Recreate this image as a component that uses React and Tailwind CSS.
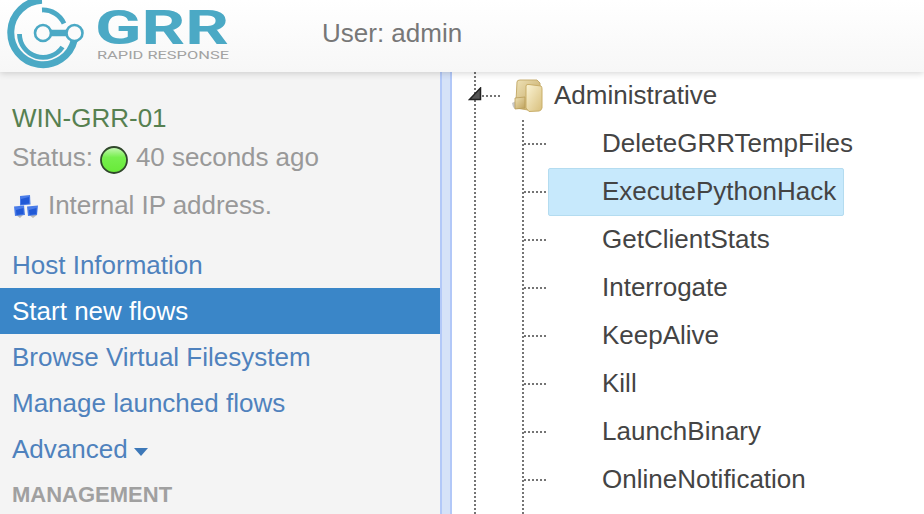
const flows = [
  { name: "DeleteGRRTempFiles" },
  { name: "ExecutePythonHack", selected: true },
  { name: "GetClientStats" },
  { name: "Interrogate" },
  { name: "KeepAlive" },
  { name: "Kill" },
  { name: "LaunchBinary" },
  { name: "OnlineNotification" },
];

const links = [
  { name: "Host Information" },
  { name: "Start new flows", selected: true },
  { name: "Browse Virtual Filesystem" },
  { name: "Manage launched flows" },
];

function Logo() {
  return (
    <svg width="240" height="72" viewBox="0 0 240 72" className="shrink-0">
      <g fill="none" stroke="#4ba9c5">
        <path d="M42 .3A32.2 32.2 0 1 0 74.3 40" strokeWidth="7" />
        <path d="M42 10A23 23 0 0 1 64 23.5" strokeWidth="4.8" />
        <path d="M19.5 34A23.5 23.5 0 0 0 62.5 47" strokeWidth="4.8" />
        <path d="M50 33H68" strokeWidth="6.5" />
        <circle cx="43" cy="33" r="8" strokeWidth="2.6" fill="#fbfbfb" />
        <circle cx="74.5" cy="33" r="8" strokeWidth="2.6" fill="#fbfbfb" />
      </g>
      <text x="95" y="44" textLength="134" lengthAdjust="spacingAndGlyphs" fontFamily="Roboto, sans-serif" fontSize="48" fontWeight="700" fill="#4ba9c5">GRR</text>
      <text x="97" y="58.5" textLength="132" lengthAdjust="spacingAndGlyphs" fontFamily="Roboto, sans-serif" fontSize="11.5" fill="#a2a2a2">RAPID RESPONSE</text>
    </svg>
  );
}

function Folder() {
  return (
    <svg width="34" height="36" viewBox="0 0 34 36" className="shrink-0">
      <defs>
        <linearGradient id="front" x1="0" y1="0" x2="1" y2="1">
          <stop offset="0" stopColor="#fbf4d5" />
          <stop offset="1" stopColor="#d8bf7c" />
        </linearGradient>
        <linearGradient id="back" x1="0" y1="0" x2="1" y2="1">
          <stop offset="0" stopColor="#efe2b6" />
          <stop offset="1" stopColor="#bea15b" />
        </linearGradient>
      </defs>
      <path d="M0 25L4 23V31Q1 31 0 25Z" fill="#c8c8c8" />
      <path d="M5 4Q5 2 8 2H25L28 5V30L16 32L4 30V23Z" fill="url(#back)" stroke="#c6ad6e" strokeWidth="1" />
      <path d="M3 20L13 19V30L3 31Z" fill="url(#back)" stroke="#b99c58" strokeWidth=".8" />
      <path d="M14 8Q14 6 17 6.5L29 8Q30 9 30 11V30Q29 33 27 33L17 33.5L14 30Z" fill="url(#front)" stroke="#c9ae69" strokeWidth="1" />
    </svg>
  );
}

function NetworkIcon() {
  return (
    <svg width="28" height="28" viewBox="0 0 28 28" className="shrink-0">
      <path d="M4 24H11L8 27ZM17 24H25L21 27Z" fill="#b9b9b9" />
      <g fill="#4a7ce8">
        <path d="M8 5L18 4L18.500 13.500L8 14.500Z" />
        <path d="M2 15.500L12 14.500L13 24L3 25Z" />
        <path d="M15 15.500L26 14.500L25 24L16 25Z" />
      </g>
      <path d="M9 8L17 6V12.500L9 13.500ZM4 19L11.500 17V23L4.500 24ZM17 19L24.500 17V23L17.500 24Z" fill="#2159d6" />
    </svg>
  );
}

function StatusLight() {
  return (
    <svg width="28" height="30" viewBox="0 0 28 30" className="mt-[3px] mr-2 ml-[7px] shrink-0">
      <defs>
        <linearGradient id="light" x1="0" y1="0" x2="0" y2="1">
          <stop offset="0" stopColor="#c9f8b8" />
          <stop offset=".4" stopColor="#76ef4d" />
          <stop offset="1" stopColor="#68ea38" />
        </linearGradient>
      </defs>
      <circle cx="14" cy="16" r="13" fill="url(#light)" stroke="#30472b" strokeWidth="1.8" />
    </svg>
  );
}

function Branch() {
  return <div className="h-[2px] w-[24px] bg-[repeating-linear-gradient(90deg,#747474_0px_2px,transparent_2px_4px)]" />;
}

export default function App() {
  return (
    <div className="flex h-[514px] w-[924px] flex-col overflow-hidden bg-white font-['Liberation_Sans',Arial,sans-serif] text-[26px] whitespace-nowrap text-[#444]">
      <header className="z-10 flex h-[72px] shrink-0 bg-linear-to-b from-white to-[#f7f7f7] shadow-[0_1px_7px_rgba(0,0,0,0.18)]">
        <Logo />
        <span className="ml-[82px] leading-[66px] text-[#777]">User: admin</span>
      </header>
      <div className="flex min-h-0 flex-1">
        <aside className="flex w-[440px] shrink-0 flex-col bg-[#f4f4f4] text-[#999]">
          <div className="mt-[27px] h-[39px] pl-3 leading-[39px] text-[#568050]">WIN-GRR-01</div>
          <div className="flex h-[39px] items-center pl-3">
            <span className="leading-[38px]">Status:</span>
            <StatusLight />
            <span className="leading-[38px] tracking-[-0.05px]">40 seconds ago</span>
          </div>
          <div className="mt-[9px] flex h-[40px] items-center pl-3">
            <NetworkIcon />
            <span className="ml-2 leading-[40px] tracking-[-0.05px]">Internal IP address.</span>
          </div>
          <nav className="mt-[17px] flex flex-col text-[#4f82bd]">
            {links.map((l) => (
              <div key={l.name} className={"h-[46px] pl-3 leading-[46px]" + (l.selected ? " bg-[#3a86c8] text-white" : "")}>
                {l.name}
              </div>
            ))}
            <div className="flex h-[46px] items-center pl-3">
              <span>Advanced</span>
              <span className="mt-[5px] ml-[6px] border-x-[7px] border-t-[8px] border-x-transparent border-t-[#3d78b8]" />
            </div>
          </nav>
          <div className="pl-3 text-[22px] leading-[46px] font-bold text-[#a0a0a0]">MANAGEMENT</div>
        </aside>
        <div className="w-[12px] shrink-0 border-x-2 border-[#b2c8f8] bg-[#d5e2f8]" />
        <main className="flex flex-1">
          <div className="ml-[22px] w-[2px] shrink-0 bg-[repeating-linear-gradient(180deg,#747474_0px_2px,transparent_2px_4px)]" />
          <div className="flex flex-1 flex-col">
            <div className="flex h-[48px] items-center">
              <svg width="14" height="14" viewBox="0 0 14 14" className="mb-[4px] -ml-[8px] shrink-0">
                <path d="M1.500 12.500H12.500V1Z" fill="#555" stroke="#222" strokeWidth="1.5" />
              </svg>
              <div className="w-[20px] overflow-hidden"><Branch /></div>
              <div className="ml-[10px]"><Folder /></div>
              <span className="mb-[2px] ml-[8px] leading-[46px]">Administrative</span>
            </div>
            <div className="ml-[46px] flex flex-1">
              <div className="w-[2px] shrink-0 bg-[repeating-linear-gradient(180deg,#747474_0px_2px,transparent_2px_4px)]" />
              <div>
                {flows.map((f) => (
                  <div key={f.name} className="flex h-[48px] items-center">
                    <Branch />
                    <div className={"h-[48px] border pr-[7px] pl-[53px] leading-[45px]" + (f.selected ? " rounded-xs border-[#b4dcf0] bg-[#c7e9fc]" : " border-transparent")}>
                      {f.name}
                    </div>
                  </div>
                ))}
              </div>
            </div>
          </div>
        </main>
      </div>
    </div>
  );
}
